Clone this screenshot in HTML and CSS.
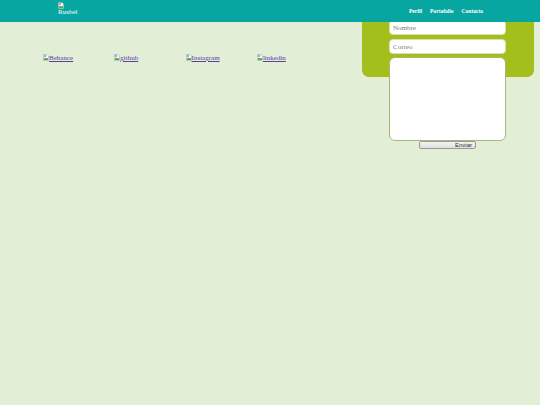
FILE: index.html
```html
<!DOCTYPE html>
<html lang="es">
<head>
<meta charset="utf-8">
<title>Rusbel</title>
<link rel="stylesheet" href="styles.css">
</head>
<body>
<header class="topbar">
  <a class="logo" href="#">
    <svg class="broken" viewBox="0 0 6 7" width="6" height="7"><path d="M0.5 0.5H4L5.5 2V6.5H0.5Z" fill="#fff" stroke="#9aa" stroke-width="0.6"/><path d="M1 6V4.5L2.3 3.4L3.4 4.4L4.2 3.8L5 4.5V6Z" fill="#5aa83c"/><rect x="1" y="1.2" width="2.2" height="1.6" fill="#6fa7e0"/></svg>
    <span class="logo-text">Rusbel</span>
  </a>
  <nav class="nav">
    <a href="#">Perfil</a>
    <a href="#">Portafolio</a>
    <a href="#">Contacto</a>
  </nav>
</header>
<main class="page">
  <section class="socials">
    <a class="social" href="#"><svg class="broken" viewBox="0 0 6 7" width="6" height="7"><path d="M0.5 0.5H4L5.5 2V6.5H0.5Z" fill="#fff" stroke="#9aa" stroke-width="0.6"/><path d="M1 6V4.5L2.3 3.4L3.4 4.4L4.2 3.8L5 4.5V6Z" fill="#5aa83c"/><rect x="1" y="1.2" width="2.2" height="1.6" fill="#6fa7e0"/></svg>Behance</a>
    <a class="social" href="#"><svg class="broken" viewBox="0 0 6 7" width="6" height="7"><path d="M0.5 0.5H4L5.5 2V6.5H0.5Z" fill="#fff" stroke="#9aa" stroke-width="0.6"/><path d="M1 6V4.5L2.3 3.4L3.4 4.4L4.2 3.8L5 4.5V6Z" fill="#5aa83c"/><rect x="1" y="1.2" width="2.2" height="1.6" fill="#6fa7e0"/></svg>github</a>
    <a class="social" href="#"><svg class="broken" viewBox="0 0 6 7" width="6" height="7"><path d="M0.5 0.5H4L5.5 2V6.5H0.5Z" fill="#fff" stroke="#9aa" stroke-width="0.6"/><path d="M1 6V4.5L2.3 3.4L3.4 4.4L4.2 3.8L5 4.5V6Z" fill="#5aa83c"/><rect x="1" y="1.2" width="2.2" height="1.6" fill="#6fa7e0"/></svg>Instagram</a>
    <a class="social" href="#"><svg class="broken" viewBox="0 0 6 7" width="6" height="7"><path d="M0.5 0.5H4L5.5 2V6.5H0.5Z" fill="#fff" stroke="#9aa" stroke-width="0.6"/><path d="M1 6V4.5L2.3 3.4L3.4 4.4L4.2 3.8L5 4.5V6Z" fill="#5aa83c"/><rect x="1" y="1.2" width="2.2" height="1.6" fill="#6fa7e0"/></svg>linkedin</a>
  </section>
  <aside class="panel">
    <form class="contact">
      <input class="field" type="text" placeholder="Nombre">
      <input class="field" type="email" placeholder="Correo">
      <textarea class="message"></textarea>
      <button class="send" type="button">Enviar</button>
    </form>
  </aside>
</main>
</body>
</html>
```
FILE: styles.css
```css
* { box-sizing: border-box; }
html, body { margin: 0; padding: 0; }
body {
  background: #e2eed6;
  font-family: "Liberation Serif", "Times New Roman", serif;
  height: 405px;
}
.topbar {
  position: fixed;
  top: 0;
  left: 0;
  right: 0;
  height: 22px;
  background: #08a6a1;
  display: flex;
  align-items: flex-start;
  justify-content: space-between;
  padding: 0 57px 0 58px;
  z-index: 5;
}
.logo {
  display: flex;
  flex-direction: column;
  align-items: flex-start;
  color: #fff;
  text-decoration: none;
  padding-top: 2px;
}
.logo .broken { display: block; }
.logo-text {
  font-size: 7px;
  line-height: 8px;
  margin-top: -1px;
}
.nav {
  display: flex;
  gap: 8px;
  padding-top: 8px;
}
.nav a {
  color: #fff;
  font-weight: bold;
  font-size: 5.5px;
  line-height: 7px;
  text-decoration: none;
}
.page {
  display: flex;
  align-items: flex-start;
}
.socials {
  display: flex;
  padding: 54px 0 0 43px;
}
.social {
  width: 71.3px;
  font-size: 7px;
  line-height: 8px;
  color: #5a3fa0;
  text-decoration: underline;
  white-space: nowrap;
}
.social .broken {
  vertical-align: -1px;
}
.panel {
  margin-left: auto;
  margin-right: 6px;
  width: 172px;
  height: 77px;
  background: #a3bf1b;
  border-radius: 0 0 7px 7px;
  padding: 20px 28px 0 27px;
}
.contact {
  display: flex;
  flex-direction: column;
  align-items: center;
}
.field {
  width: 117px;
  height: 15px;
  margin: 0 0 4px;
  border: 1px solid #d6e2b0;
  border-radius: 4px;
  background: #fff;
  font-family: "Liberation Serif", serif;
  font-size: 7px;
  padding: 0 3px;
  outline: none;
}
.field::placeholder { color: #7a7a7a; }
.message {
  width: 117px;
  height: 84px;
  margin: -1px 0 0;
  border: 1px solid #aab77a;
  border-radius: 6px;
  background: #fff;
  resize: none;
  outline: none;
}
.send {
  width: 57px;
  height: 8px;
  margin-top: 0;
  padding: 0 3px 0 0;
  border: 1px solid #9a9a9a;
  border-radius: 2px;
  background: linear-gradient(#f4f4f4, #dedede);
  font-family: "Liberation Sans", Arial, sans-serif;
  font-size: 6px;
  line-height: 6px;
  color: #333;
  text-align: right;
}
```
